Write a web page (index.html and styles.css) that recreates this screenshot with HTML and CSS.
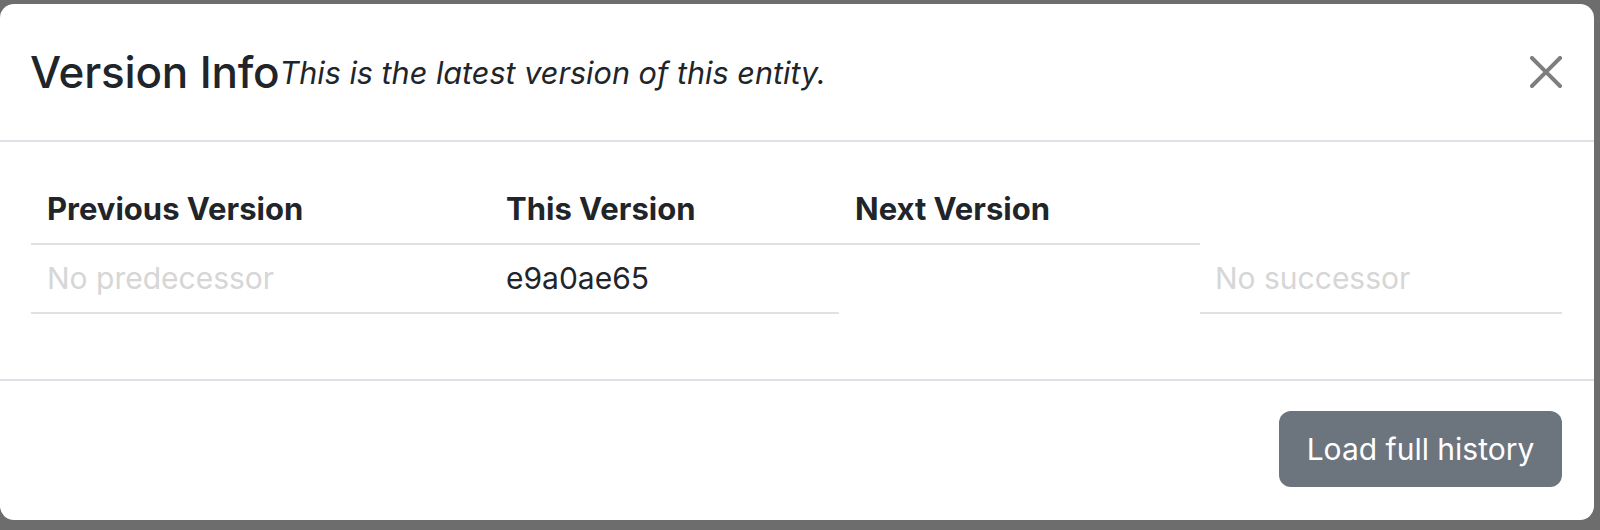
FILE: index.html
```html
<!DOCTYPE html>
<html>
<head>
<meta charset="utf-8">
<link rel="stylesheet" href="styles.css">
</head>
<body>
<div class="modal">
  <div class="modal-header">
    <div class="title-group">
      <h5 class="modal-title">Version Info</h5>
      <span class="subtitle">This is the latest version of this entity.</span>
    </div>
    <button class="btn-close" aria-label="Close">
      <svg viewBox="0 0 16 16" width="32" height="32"><path d="M.293.293a1 1 0 0 1 1.414 0L8 6.586 14.293.293a1 1 0 1 1 1.414 1.414L9.414 8l6.293 6.293a1 1 0 0 1-1.414 1.414L8 9.414l-6.293 6.293a1 1 0 0 1-1.414-1.414L6.586 8 .293 1.707a1 1 0 0 1 0-1.414z"/></svg>
    </button>
  </div>
  <div class="modal-body">
    <table class="versions">
      <thead>
        <tr>
          <th class="col-prev">Previous Version</th>
          <th class="col-this">This Version</th>
          <th class="col-next">Next Version</th>
        </tr>
      </thead>
      <tbody>
        <tr>
          <td class="muted">No predecessor</td>
          <td>e9a0ae65</td>
        </tr>
      </tbody>
    </table>
    <div class="successor">
      <div class="successor-cell muted">No successor</div>
    </div>
  </div>
  <div class="modal-footer">
    <button class="btn-secondary">Load full history</button>
  </div>
</div>
</body>
</html>
```
FILE: styles.css
```css
html, body {
  margin: 0;
  padding: 0;
}
body {
  background: #6d6d6d;
  padding-top: 4px;
  height: 530px;
  box-sizing: border-box;
  font-family: Inter, "Noto Sans", "Liberation Sans", sans-serif;
  color: #212529;
  font-size: 30px;
  overflow: hidden;
}
.modal {
  width: 1594px;
  height: 516px;
  background: #fff;
  border-radius: 14px;
  display: flex;
  flex-direction: column;
  overflow: hidden;
}
.modal-header {
  height: 138px;
  flex: 0 0 auto;
  box-sizing: border-box;
  border-bottom: 2px solid #dee2e6;
  display: flex;
  align-items: center;
  padding: 0 32px 0 30px;
}
.title-group {
  display: flex;
  align-items: center;
}
.modal-title {
  margin: 0;
  font-size: 44px;
  font-weight: 500;
  line-height: 52px;
  letter-spacing: -0.2px;
}
.subtitle {
  font-style: italic;
  font-size: 30.6px;
  line-height: 44px;
  margin-top: 2px;
}
.btn-close {
  margin-left: auto;
  border: 0;
  background: transparent;
  padding: 0;
  width: 32px;
  height: 32px;
  display: flex;
  opacity: .5;
  cursor: pointer;
}
.btn-close svg { fill: #000; }
.modal-body {
  flex: 0 0 auto;
  padding: 34px 32px 65px 31px;
  display: flex;
  align-items: flex-start;
}
.versions {
  border-collapse: collapse;
  width: 1169px;
  flex: 0 0 auto;
}
.versions th, .versions td {
  text-align: left;
  padding: 9px 16px 10px;
  line-height: 48px;
  vertical-align: middle;
}
.versions th {
  font-weight: 700;
  font-size: 31px;
  border-bottom: 2px solid #dee2e6;
}
.versions td {
  border-bottom: 2px solid #dee2e6;
}
.col-prev { width: 427px; }
.col-this { width: 317px; }
.col-next { width: 329px; }
.successor {
  flex: 1;
  padding-top: 69px;
}
.successor-cell {
  padding: 9px 15px 10px;
  line-height: 48px;
  border-bottom: 2px solid #dee2e6;
}
.muted { color: #d6d6d6; }
.modal-footer {
  border-top: 2px solid #dee2e6;
  flex: 1;
  display: flex;
  justify-content: flex-end;
  align-items: flex-start;
  padding: 30px 32px 0;
}
.btn-secondary {
  background: #6c757d;
  color: #fff;
  border: 0;
  border-radius: 12px;
  font-family: inherit;
  font-size: 30px;
  line-height: 44px;
  padding: 0;
  height: 76px;
  width: 283px;
  white-space: nowrap;
  text-align: center;
}
```
